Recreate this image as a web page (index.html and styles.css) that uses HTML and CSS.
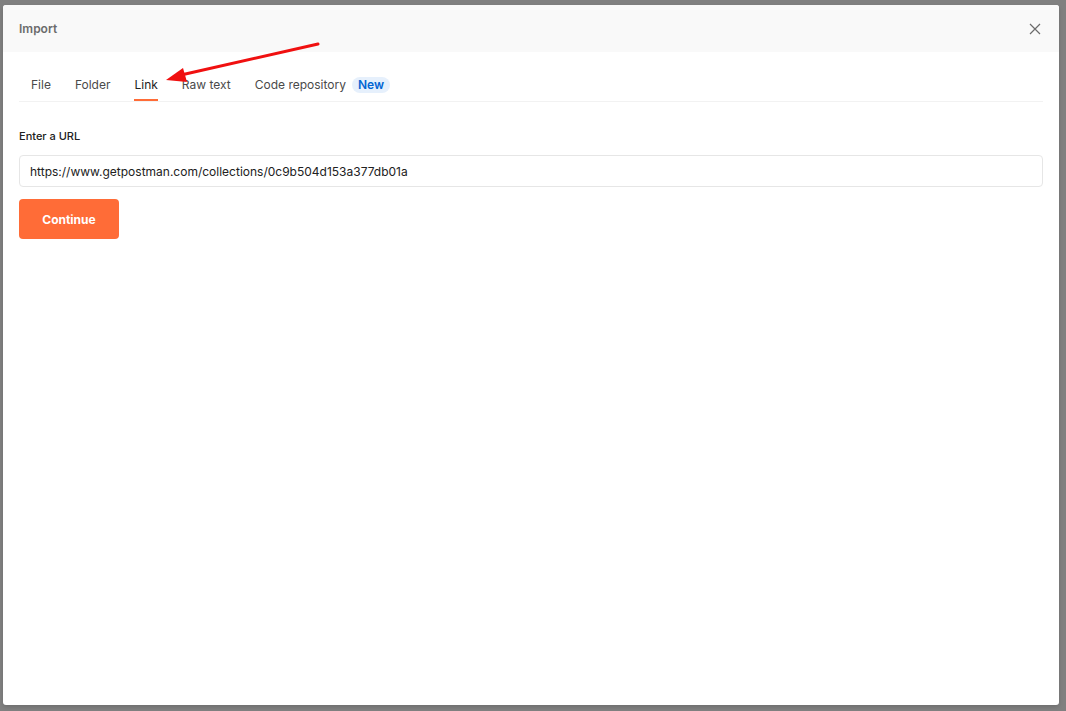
FILE: index.html
```html
<!DOCTYPE html>
<html lang="en">
<head>
    <meta charset="UTF-8">
    <meta name="viewport" content="width=device-width, initial-scale=1.0">
    <title>Import</title>
    <link rel="stylesheet" href="styles.css">
</head>
<body>
    <div class="modal">
        <div class="modal-header">
            <span class="modal-title">Import</span>
            <button class="close-btn" aria-label="Close">
                <svg width="12" height="12" viewBox="0 0 12 12"><path d="M1 1L11 11M11 1L1 11" stroke="#6b6b6b" stroke-width="1.2" fill="none"/></svg>
            </button>
        </div>
        <div class="modal-body">
            <div class="tabs">
                <span class="tab">File</span>
                <span class="tab">Folder</span>
                <span class="tab active">Link</span>
                <span class="tab">Raw text</span>
                <span class="tab">Code repository <span class="badge">New</span></span>
            </div>

            <label class="field-label" for="url">Enter a URL</label>
            <input type="text" id="url" class="url-input" value="https://www.getpostman.com/collections/0c9b504d153a377db01a">
            <button class="continue-btn">Continue</button>
        </div>

        <!-- annotation arrow -->
        <svg class="arrow" width="170" height="50" viewBox="0 0 170 50">
            <line x1="165" y1="5" x2="28" y2="36" stroke="#f01010" stroke-width="3" stroke-linecap="round"/>
            <polygon points="13,41 30,29 34,43" fill="#f01010"/>
        </svg>
    </div>
</body>
</html>
```

FILE: styles.css
```css
body {
    margin: 0;
    background-color: #808080;
    font-family: Inter, "Noto Sans", sans-serif;
    height: 711px;
    overflow: hidden;
}

.modal {
    position: relative;
    margin: 5px 7px 0 3px;
    height: 700px;
    background-color: #fff;
    border-radius: 3px;
    display: flex;
    flex-direction: column;
    box-shadow: 0 2px 4px rgba(0, 0, 0, 0.15);
}

.modal-header {
    height: 47px;
    background-color: #f9f9f9;
    border-radius: 3px 3px 0 0;
    display: flex;
    align-items: center;
    justify-content: space-between;
    padding: 0 16px;
}

.modal-title {
    font-size: 12px;
    font-weight: 600;
    color: #6b6b6b;
}

.close-btn {
    background: none;
    border: none;
    padding: 0;
    width: 12px;
    height: 12px;
    margin-right: 2px;
    display: flex;
    cursor: pointer;
}

.modal-body {
    padding: 0 16px;
}

.tabs {
    display: flex;
    align-items: flex-end;
    padding-top: 25px;
    border-bottom: 1px solid #f2f2f2;
}

.tab {
    margin: 0 12px;
    padding-bottom: 6px;
    font-size: 12px;
    line-height: 16px;
    color: #4a4a4a;
    border-bottom: 2px solid transparent;
    display: flex;
    align-items: center;
    cursor: pointer;
}

.tab.active {
    color: #212121;
    border-bottom-color: #ff6c37;
}

.badge {
    margin-left: 6px;
    padding: 0 6px;
    height: 16px;
    line-height: 16px;
    font-size: 12px;
    font-weight: 600;
    color: #0265d2;
    background-color: #e6f0fc;
    border-radius: 8px;
}

.field-label {
    display: block;
    margin-top: 26px;
    font-size: 11px;
    line-height: 16px;
    font-weight: 500;
    color: #212121;
}

.url-input {
    display: block;
    box-sizing: border-box;
    width: 100%;
    height: 32px;
    margin-top: 11px;
    padding: 0 10px;
    font-family: inherit;
    font-size: 12px;
    color: #212121;
    border: 1px solid #e6e6e6;
    border-radius: 4px;
    outline: none;
}

.continue-btn {
    display: block;
    margin-top: 12px;
    width: 100px;
    height: 40px;
    background-color: #ff6c37;
    color: #fff;
    border: none;
    border-radius: 4px;
    font-family: inherit;
    font-size: 12px;
    font-weight: 700;
    cursor: pointer;
}

.arrow {
    position: absolute;
    left: 150px;
    top: 34px;
}
```
